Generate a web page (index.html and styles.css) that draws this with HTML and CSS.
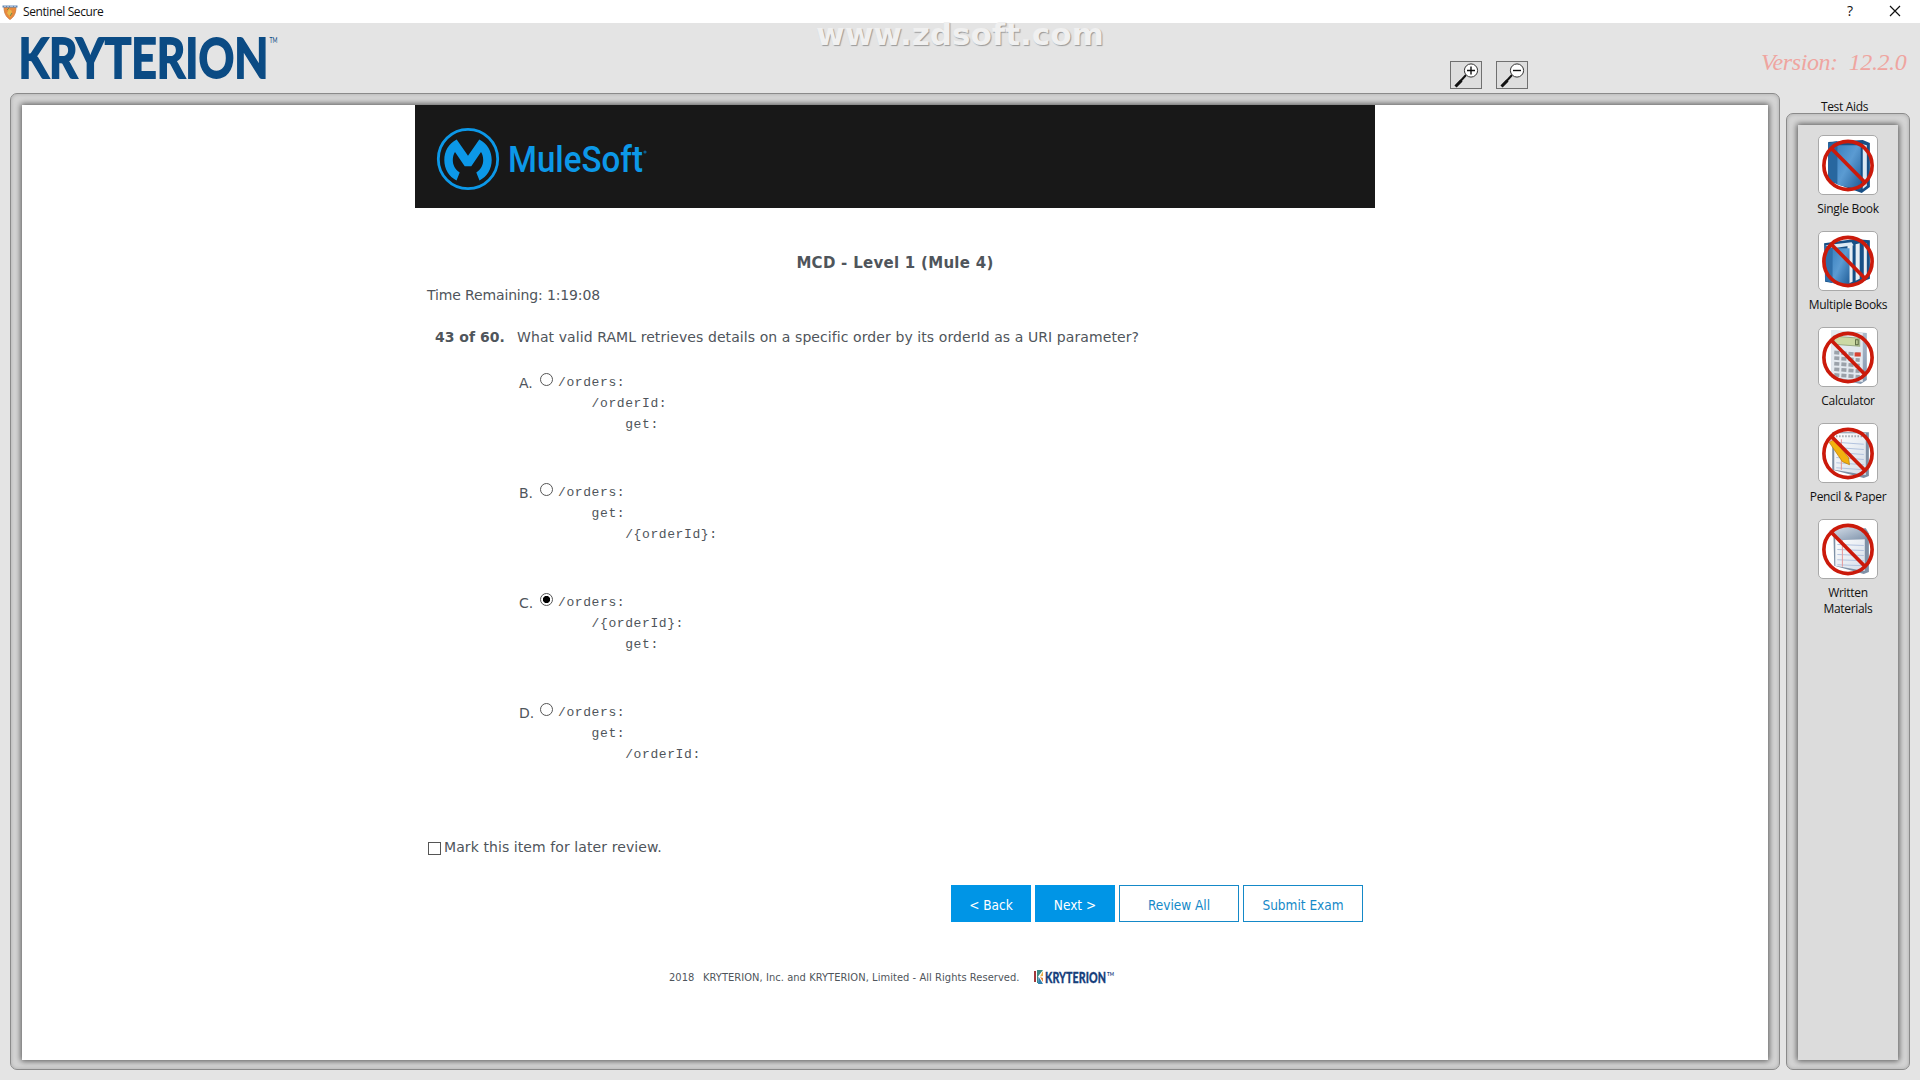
FILE: index.html
```html
<!DOCTYPE html>
<html lang="en">
<head>
<meta charset="utf-8">
<title>Sentinel Secure</title>
<link rel="stylesheet" href="styles.css">
</head>
<body>
<svg class="defs" width="0" height="0" aria-hidden="true">
  <defs>
    <linearGradient id="blue" x1="0" y1="0" x2="1" y2="1"><stop offset="0" stop-color="#3b82c0"/><stop offset=".45" stop-color="#5b9bd2"/><stop offset="1" stop-color="#1f5c96"/></linearGradient>
    <linearGradient id="paper" x1="0" y1="0" x2="1" y2="1"><stop offset="0" stop-color="#ffffff"/><stop offset="1" stop-color="#d4dde8"/></linearGradient>
    <linearGradient id="steel" x1="0" y1="0" x2="1" y2="1"><stop offset="0" stop-color="#d9e2ec"/><stop offset="1" stop-color="#7f93ab"/></linearGradient>
    <g id="ban" fill="none" stroke="#cb1a0b" stroke-width="3.6"><circle cx="29" cy="30" r="23.700"/><path d="M13 13.500L45.500 46.500"/></g>
  </defs>
</svg>
<header class="titlebar">
  <svg class="app-icon" width="16" height="16" viewBox="0 0 16 16"><path d="M2 3h12c0 6-2 10-6 12.500C4 13 2 9 2 3z" fill="#ea8a3c" stroke="#c9783f" stroke-width=".8"/><path d="M7 5l3 2-2 6-3-4z" fill="#e7b94c"/><path d="M5 6l2-2M8 12l2-3" stroke="#6b8f4a"/><path d="M.5 1.500h15v2h-15z" fill="#5f86b5"/><path d="M2 2.200h2m1 0h2m1 0h3m1 0h2" stroke="#c5d6ea"/></svg>
  <span class="app-name">Sentinel Secure</span>
  <span class="help">?</span>
  <svg class="close" width="12" height="12" viewBox="0 0 12 12"><path d="M1 1l10 10M11 1L1 11" stroke="#111" stroke-width="1.200"/></svg>
</header>
<div class="app">
  <div class="left">
    <div class="brandbar">
      <svg class="kryterion" width="260" height="56" viewBox="0 0 260 56"><g fill="#0b4b84" font-family="Lato, sans-serif" font-weight="700"><text x="4.500" y="50" font-size="54.500" textLength="250" lengthAdjust="spacingAndGlyphs" stroke="#0b4b84" stroke-width="1.800">KRYTERION</text><text x="255.500" y="15" font-size="7" textLength="8" lengthAdjust="spacingAndGlyphs" font-weight="400">TM</text></g></svg>
      <div class="zoomers">
        <button class="zoom" aria-label="Zoom in"><svg width="30" height="26" viewBox="0 0 30 26"><path d="M15 13L5 24" stroke="#111" stroke-width="2"/><path d="M10.500 18.500L4.500 24.500" stroke="#111" stroke-width="3"/><circle cx="20" cy="8.500" r="6.600" fill="#fff" stroke="#333"/><path d="M16 8.500h8M20 4.500v8" stroke="#111" stroke-width="1.400"/></svg></button>
        <button class="zoom" aria-label="Zoom out"><svg width="30" height="26" viewBox="0 0 30 26"><path d="M15 13L5 24" stroke="#111" stroke-width="2"/><path d="M10.500 18.500L4.500 24.500" stroke="#111" stroke-width="3"/><circle cx="20" cy="8.500" r="6.600" fill="#fff" stroke="#333"/><path d="M16 8.500h8" stroke="#111" stroke-width="1.400"/></svg></button>
      </div>
    </div>
    <div class="frame main-frame">
      <main class="page">
        <div class="exam">
          <div class="banner">
            <svg width="230" height="64" viewBox="0 0 230 64"><circle cx="32" cy="32" r="29.700" fill="none" stroke="#0c98e8" stroke-width="2.800"/><path transform="translate(.5 0)" d="M20.200 12.500L31.500 28.800L42.800 12.500C51 17 55.200 24 55.200 33C55.200 42 50.500 49.500 43 53.500L39.800 45.500C44.500 42.500 46.700 38 46.700 33C46.700 30 46 27.200 44.500 25L34.800 39.300H28.200L18.500 25C17 27.200 16.300 30 16.300 33C16.300 38 18.500 42.500 23.200 45.500L20 53.500C12.500 49.500 7.800 42 7.800 33C7.800 24 12 17 20.200 12.500Z" fill="#0c98e8"/><text x="72" y="45" fill="#0c98e8" font-family="Roboto, sans-serif" font-weight="500" font-size="36" textLength="135" lengthAdjust="spacingAndGlyphs">MuleSoft</text><circle cx="209" cy="25" r="1.600" fill="#0b5f90"/></svg>
          </div>
          <h1 class="title">MCD - Level 1 (Mule 4)</h1>
          <p class="time">Time Remaining: 1:19:08</p>
          <div class="question"><b class="number">43 of 60.</b><span>What valid RAML retrieves details on a specific order by its orderId as a URI parameter?</span></div>
          <div class="options">
            <label class="option"><span class="letter">A.</span><span class="radio"></span><pre>/orders:
    /orderId:
        get:</pre></label>
            <label class="option"><span class="letter">B.</span><span class="radio"></span><pre>/orders:
    get:
        /{orderId}:</pre></label>
            <label class="option"><span class="letter">C.</span><span class="radio checked"></span><pre>/orders:
    /{orderId}:
        get:</pre></label>
            <label class="option"><span class="letter">D.</span><span class="radio"></span><pre>/orders:
    get:
        /orderId:</pre></label>
          </div>
          <label class="mark"><span class="checkbox"></span><span>Mark this item for later review.</span></label>
          <div class="actions">
            <button class="btn solid">&lt; Back</button>
            <button class="btn solid">Next &gt;</button>
            <button class="btn">Review All</button>
            <button class="btn">Submit Exam</button>
          </div>
          <footer class="footer">
            <span class="year">2018</span><span>KRYTERION, Inc. and KRYTERION, Limited - All Rights Reserved.</span>
            <svg class="footer-logo" width="82" height="18" viewBox="0 0 82 18"><path d="M1 3h2v11H1z" fill="#a23a3c"/><path d="M4 2h6L5 8.500V15H4z" fill="#3b8a84"/><path d="M10 3v5L7 8.500z" fill="#e8b04a"/><path d="M5.500 8.500L10 16H5z" fill="#2f7fb0"/><path d="M7 9l3 1v4z" fill="#e87f35"/><text x="12" y="14.500" fill="#17407c" stroke="#17407c" stroke-width=".3" font-family="Lato, sans-serif" font-weight="900" font-size="14.500" textLength="61" lengthAdjust="spacingAndGlyphs">KRYTERION</text><text x="74" y="8" fill="#17407c" font-family="Lato, sans-serif" font-weight="700" font-size="5" textLength="7" lengthAdjust="spacingAndGlyphs">TM</text></svg>
          </footer>
        </div>
      </main>
    </div>
  </div>
  <aside class="right">
    <div class="version">Version:&nbsp; 12.2.0</div>
    <div class="aids-title">Test Aids</div>
    <div class="frame aids-frame">
      <div class="aids">
        <div class="aid"><div class="tile"><svg width="58" height="58" viewBox="0 0 57 57"><path d="M9 6l34-2 7 3v43l-8 6-33-12z" fill="#174f86"/><path d="M43 8l4 1v40l-4 3z" fill="#dbe8f4"/><path d="M9 7l9-2v42l-9-3z" fill="#28679f"/><path d="M18 9h23v44l-23-5z" fill="url(#blue)"/><use href="#ban" x="-.5" y="-1"/></svg></div><span>Single Book</span></div>
        <div class="aid"><div class="tile"><svg width="58" height="58" viewBox="0 0 57 57"><path d="M5 11l30-4 15 1v38l-18 7-26-4z" fill="#174f86"/><path d="M28 13l5-1v37l-5 2zM36 12l4-1v35l-4 2zM44 12l3-1v33l-3 2z" fill="#e8eef4"/><path d="M6 13l26-3 2 3-20 3z" fill="#dde9f4"/><path d="M13 16h17v37l-17-3z" fill="url(#blue)"/><path d="M6 13l7 3v34l-7-2z" fill="#2f6faa"/><use href="#ban" x="-.5" y="-1"/></svg></div><span>Multiple Books</span></div>
        <div class="aid"><div class="tile"><svg width="58" height="58" viewBox="0 0 57 57"><path d="M12 2l35 3v46l-6 4-29-6z" fill="url(#steel)"/><path d="M12 2l31 3v48l-31-5z" fill="#e3e9ef"/><path d="M15 8l25 2v8l-25-2z" fill="#cbd9a4" stroke="#9aab85"/><path d="M36 11.500h2.500v5H36z" fill="none" stroke="#52613c"/><g stroke="#9ba2aa" stroke-width="3.600" stroke-dasharray="5 2"><path d="M15 24l25 2M15 29.500l25 2M15 35l25 2M15 40.500l25 2M15 46l25 2"/></g><path d="M35 24h6v4h-6z" fill="#d94232"/><use href="#ban" x="-.5" y="-1"/></svg></div><span>Calculator</span></div>
        <div class="aid"><div class="tile"><svg width="58" height="58" viewBox="0 0 57 57"><path d="M13 8h36v43l-5 2-31-8z" fill="#7e8fa3"/><path d="M15 9h31v41l-31-5z" fill="url(#paper)"/><path d="M17 12h28" stroke="#7b828b" stroke-width="2" stroke-dasharray="1 2"/><path d="M17 18l27 2M17 23l27 2M17 28l27 2M17 33l27 2M17 38l27 2M17 43l27 2" stroke="#b3c3de"/><path d="M22 15v30" stroke="#e59a9a"/><path d="M10 18l5-3 14 18 1 7-7-3z" fill="#f2b10f" stroke="#b97a10" stroke-width=".7"/><path d="M10 18l5-3-3-2-3 2z" fill="#e7a9a0"/><use href="#ban" x="-.5" y="-1"/></svg></div><span>Pencil &amp; Paper</span></div>
        <div class="aid"><div class="tile"><svg width="58" height="58" viewBox="0 0 57 57"><path d="M14 8h32l3 5v38l-5 2-29-8z" fill="#7f91a6"/><path d="M16 18h29v32l-29-5z" fill="url(#paper)"/><path d="M10 10q20-5 34-2l2 11-28 1z" fill="url(#steel)"/><path d="M18 24l26 1M18 29l26 1M18 34l26 1M18 39l26 1M18 44l26 1" stroke="#b3c3de"/><path d="M23 20v26" stroke="#e59a9a"/><use href="#ban" x="-.5" y="-1"/></svg></div><span>Written<br>Materials</span></div>
      </div>
    </div>
  </aside>
</div>
<div class="watermark">www.zdsoft.com</div>
</body>
</html>
```
FILE: styles.css
```css
* { box-sizing: border-box; }
body {
  margin: 0;
  width: 1920px;
  height: 1080px;
  overflow: hidden;
  display: flex;
  flex-direction: column;
  background: #e4e4e4;
  color: #4f555b;
  font-family: "DejaVu Sans", Verdana, sans-serif;
  font-size: 14px;
}
.defs { position: absolute; }
h1, p, pre { margin: 0; }
button { font: inherit; padding: 0; margin: 0; }

.titlebar {
  height: 23px;
  flex: none;
  background: #fff;
  display: flex;
  align-items: center;
  padding: 0 19px 2px 2px;
  color: #111;
  font: 12px "Open Sans", sans-serif;
}
.app-icon { margin: 2px 5px 0 0; }
.app-name { flex: 1; letter-spacing: -0.4px; margin-top: 2px; }
.help { font-size: 14px; margin-right: 36px; }
.close { margin-top: 0; }

.app { flex: 1; display: flex; gap: 6px; padding: 0 10px; min-height: 0; }
.left { width: 1770px; display: flex; flex-direction: column; padding-bottom: 10px; }
.brandbar { height: 70px; display: flex; justify-content: space-between; padding: 5px 252px 0 4px; }
.kryterion { overflow: visible; }
.zoomers { display: flex; gap: 14px; padding-top: 33px; }
.zoom { width: 32px; height: 28px; border: 1px solid #707070; background: #dedede; }
.zoom svg { display: block; }

.frame {
  flex: 1;
  min-height: 0;
  display: flex;
  background: #d6d6d6;
  border: 1px solid #8a8a8a;
  border-radius: 7px;
  padding: 11px 11px 9px;
  box-shadow: inset 0 0 4px #aaa;
}
.page {
  flex: 1;
  background: #fff;
  box-shadow: 0 0 6px 1px #555;
  display: flex;
  justify-content: center;
}

.exam { width: 960px; display: flex; flex-direction: column; }
.banner { height: 103px; background: #181818; padding: 22px 0 0 21px; }
.title {
  margin-top: 45px;
  text-align: center;
  font-size: 15px;
  line-height: 20px;
  letter-spacing: 0.28px;
}
.time { margin: 12px 0 0 12px; line-height: 20px; letter-spacing: -0.14px; }
.question { display: flex; margin: 22px 0 0 20px; line-height: 20px; letter-spacing: 0.084px; white-space: nowrap; }
.number { width: 82px; letter-spacing: 0; }

.options { margin: 24px 0 0 104px; display: flex; flex-direction: column; gap: 47px; }
.option { display: flex; height: 63px; }
.letter { width: 20px; line-height: 24px; }
.radio {
  width: 13px;
  height: 13px;
  margin: 2px 5px 0 1px;
  border: 1px solid #555;
  border-radius: 50%;
  background: #fff;
}
.radio.checked { background: radial-gradient(circle, #000 3.2px, #fff 4px); }
pre {
  padding-top: 1px;
  font: 13px/21px "Liberation Mono", "Courier New", monospace;
  letter-spacing: 0.6px;
}

.mark { display: flex; margin: 73px 0 0 13px; line-height: 20px; letter-spacing: 0.085px; }
.checkbox { width: 13px; height: 13px; margin: 5px 3px 0 0; border: 1px solid #555; }

.actions { display: flex; justify-content: flex-end; gap: 4px; margin: 28px 12px 0 0; }
.btn {
  width: 120px;
  height: 37px;
  border: 1px solid #1589c8;
  background: #fff;
  color: #1589c8;
  font: 13.5px "DejaVu Sans Condensed", "DejaVu Sans", sans-serif;
  font-stretch: condensed;
  letter-spacing: 0;
  padding-top: 3px;
}
.btn.solid { width: 80px; background: #0095e6; border-color: #0095e6; color: #fff; }

.footer {
  display: flex;
  align-items: center;
  margin: 45px 0 0 254px;
  height: 20px;
  font: 11px "DejaVu Sans Condensed", "DejaVu Sans", sans-serif;
  font-stretch: condensed;
  letter-spacing: 0.06px;
  white-space: nowrap;
}
.year { width: 34px; }
.footer-logo { margin-left: 13px; flex: none; overflow: visible; }

.right { width: 124px; display: flex; flex-direction: column; padding-bottom: 10px; }
.version {
  height: 76px;
  padding-top: 25px;
  margin-left: -25px;
  color: #efa5a0;
  font: italic 24px/28px "Liberation Serif", serif;
  letter-spacing: -0.42px;
  white-space: nowrap;
}
.aids-title {
  height: 14px;
  color: #111;
  font: 12px/16px "Open Sans", sans-serif;
  letter-spacing: -0.34px;
  text-align: center;
  margin: 0 7px 0 0;
}
.aids {
  flex: 1;
  background: #dcdcdc;
  box-shadow: 0 0 6px 1px #555;
  display: flex;
  flex-direction: column;
  align-items: center;
  gap: 14px;
  padding-top: 10px;
}
.aid {
  display: flex;
  flex-direction: column;
  align-items: center;
  gap: 6px;
  color: #111;
  font: 12px/16px "Open Sans", sans-serif;
  letter-spacing: -0.32px;
  text-align: center;
  white-space: nowrap;
}
.tile { width: 60px; height: 60px; border: 1px solid #a9a9a9; border-radius: 5px; background: #fff; }
.tile svg { display: block; }

.watermark {
  position: absolute;
  left: 816px;
  top: 15px;
  font: 900 31px/38px "DejaVu Sans", sans-serif;
  letter-spacing: 0;
  color: #f0f0f0;
  text-shadow: 1px 1px 1px #999;
  white-space: nowrap;
}
```
